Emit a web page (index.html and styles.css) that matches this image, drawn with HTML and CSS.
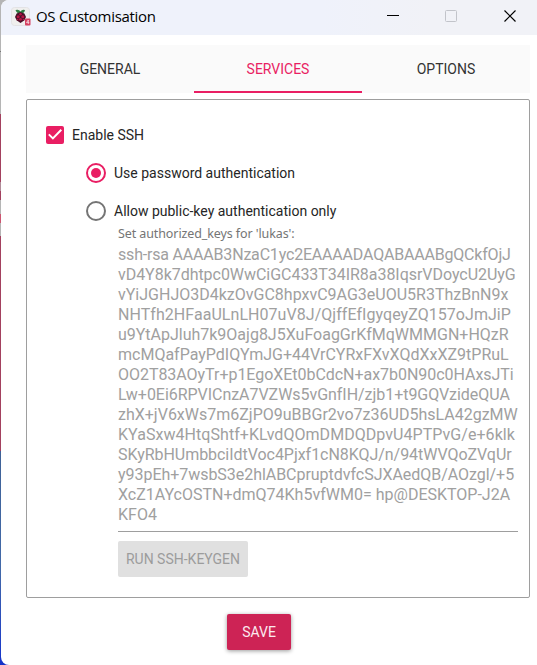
FILE: index.html
```
<!DOCTYPE html>
<html lang="en">
<head>
    <meta charset="UTF-8" />
    <meta name="viewport" content="width=device-width, initial-scale=1.0"/>
    <title>OS Customisation</title>
    <link rel="stylesheet" href="styles.css">
</head>
<body>

<div class="desktop">
<div class="window">
    <header class="titlebar">
        <svg class="app-icon" width="20" height="20" viewBox="0 0 20 20">
            <rect x="0.5" y="0.5" width="18" height="18" rx="3" fill="#f0efee" stroke="#e3e3e5"/>
            <path d="M4.5 3 Q8 1.8 9.5 4.5 Q11 1.8 14 3 Q13.5 6.5 9.5 6.5 Q5.5 6.5 4.5 3Z" fill="#2f7d43"/>
            <path d="M9.5 5 L13.4 6.5 L15 10 L13.4 13.2 L9.5 16 L5.6 13.2 L4 10 L5.6 6.5Z" fill="#4a1028"/>
            <g fill="#b51443">
                <circle cx="9.5" cy="7.3" r="1.2"/>
                <circle cx="7.2" cy="9.7" r="1.5"/>
                <circle cx="11.8" cy="9.7" r="1.5"/>
                <circle cx="9.5" cy="12.3" r="1.4"/>
                <circle cx="6.6" cy="12.6" r="0.8"/>
                <circle cx="12.4" cy="12.6" r="0.8"/>
            </g>
            <rect x="14" y="11.5" width="5.5" height="7" rx="1" fill="#d64061"/>
            <path d="M17.3 17v-4l-1.8 2.6h2.8" stroke="#f8dce2" stroke-width="0.8" fill="none"/>
        </svg>
        <h1 class="title">OS Customisation</h1>
        <div class="window-buttons">
            <svg width="58" height="35"><path d="M0 15.5h12" stroke="#000" fill="none"/></svg>
            <svg width="59" height="35"><rect x="0.5" y="10.5" width="11" height="11" rx="1" stroke="#c2c4ca" fill="none"/></svg>
            <svg width="33" height="35"><path d="M0.5 10.5l11 11M11.5 10.5l-11 11" stroke="#000" stroke-width="1.2" fill="none"/></svg>
        </div>
    </header>

    <nav class="tabs">
        <a class="tab">GENERAL</a>
        <a class="tab active">SERVICES</a>
        <a class="tab">OPTIONS</a>
    </nav>

    <main class="panel">
        <div class="option">
            <svg width="18" height="18" viewBox="0 0 18 18">
                <rect width="18" height="18" rx="2" fill="#e91e63"/>
                <path d="M2.8 8.4l4.1 4L15.3 3.8" stroke="#fff" stroke-width="2" fill="none"/>
            </svg>
            <span>Enable SSH</span>
        </div>
        <div class="option radio">
            <svg width="20" height="20" viewBox="0 0 20 20">
                <circle cx="10" cy="10" r="9" stroke="#e91e63" stroke-width="2" fill="none"/>
                <circle cx="10" cy="10" r="5" fill="#e91e63"/>
            </svg>
            <span>Use password authentication</span>
        </div>
        <div class="option radio">
            <svg width="20" height="20" viewBox="0 0 20 20">
                <circle cx="10" cy="10" r="9" stroke="#757575" stroke-width="2" fill="none"/>
            </svg>
            <span>Allow public-key authentication only</span>
        </div>

        <div class="keys">
            <div class="keys-label">Set authorized_keys for 'lukas':</div>
            <div class="keys-text">
                <span class="tightest">ssh-rsa AAAAB3NzaC1yc2EAAAADAQABAAABgQCkfOjJ</span><br>
                <span class="tight">vD4Y8k7dhtpc0WwCiGC433T34IR8a38IqsrVDoycU2UyG</span><br>
                vYiJGHJO3D4kzOvGC8hpxvC9AG3eUOU5R3ThzBnN9x<br>
                <span class="loose">NHTfh2HFaaULnLH07uV8J/QjffEfIgyqeyZQ157oJmJiP</span><br>
                u9YtApJluh7k9Oajg8J5XuFoagGrKfMqWMMGN+HQzR<br>
                mcMQafPayPdIQYmJG+44VrCYRxFXvXQdXxXZ9tPRuL<br>
                <span class="tight">OO2T83AOyTr+p1EgoXEt0bCdcN+ax7b0N90c0HAxsJTi</span><br>
                <span class="tight">Lw+0Ei6RPVICnzA7VZWs5vGnfIH/zjb1+t9GQVzideQUA</span><br>
                zhX+jV6xWs7m6ZjPO9uBBGr2vo7z36UD5hsLA42gzMW<br>
                <span class="loose">KYaSxw4HtqShtf+KLvdQOmDMDQDpvU4PTPvG/e+6klk</span><br>
                <span class="tight">SKyRbHUmbbciIdtVoc4Pjxf1cN8KQJ/n/94tWVQoZVqUr</span><br>
                <span class="tight">y93pEh+7wsbS3e2hlABCpruptdvfcSJXAedQB/AOzgl/+5</span><br>
                XcZ1AYcOSTN+dmQ74Kh5vfWM0= hp@DESKTOP-J2A<br>
                KFO4
            </div>
            <button class="btn" disabled>RUN SSH-KEYGEN</button>
        </div>
    </main>

    <footer class="footer">
        <button class="btn save">SAVE</button>
    </footer>
</div>
</div>

</body>
</html>
```

FILE: styles.css
```
* {
    box-sizing: border-box;
}
body {
    margin: 0;
    font-family: Roboto, sans-serif;
    font-size: 14px;
    color: #262626;
}
.desktop {
    height: 665px;
    padding-left: 1px;
    overflow: hidden;
    background: linear-gradient(#b5b5b5 0 51px, #777 51px 52px, #b5b5b5 52px 114px, #a3415f 114px 182px, #b08b98 182px 191px, #a3415f 191px 200px, #b5b5b5 200px 214px, #cc5570 214px 223px, #b5b5b5 223px 236px, #a3415f 236px 451px, #3f6297 451px, #4269a9 570px, #1c3cc8 650px, #1432c8);
}
.window {
    height: 665px;
    background: #fff;
    border-radius: 8px 0 0 8px;
    overflow: hidden;
}
.titlebar {
    display: flex;
    align-items: flex-start;
    height: 35px;
    padding-left: 10px;
    background: linear-gradient(90deg, #eff2fb 60%, #f1f2f7 80%);
}
.app-icon {
    margin-top: 7px;
}
.title {
    margin: 0 0 0 5px;
    font: 15px/33px "Open Sans", sans-serif;
    letter-spacing: -0.3px;
    color: #000;
}
.window-buttons {
    display: flex;
    margin-left: auto;
}
.tabs {
    display: grid;
    grid-template-columns: repeat(3, 1fr);
    width: 504px;
    height: 48px;
    margin: 10px 0 6px 25px;
    background: #fafafa;
}
.tab {
    line-height: 48px;
    text-align: center;
    color: #333;
}
.tab.active {
    color: #e91e63;
    box-shadow: inset 0 -2px #e91e63;
}
.panel {
    width: 504px;
    height: 499px;
    margin-left: 25px;
    padding: 16px 11px 0 19px;
    border: 1px solid #9e9e9e;
    border-radius: 2px;
}
.option {
    display: flex;
    align-items: center;
    gap: 8px;
    height: 38px;
}
.option.radio {
    padding-left: 40px;
}
.keys {
    padding-left: 72px;
}
.keys-label {
    height: 14px;
    margin-top: -3px;
    font: 12.5px/14px "Noto Sans", sans-serif;
    letter-spacing: -0.1px;
    color: #757575;
}
.keys-text {
    height: 291px;
    margin-bottom: 9px;
    padding-top: 4px;
    border-bottom: 1px solid #9e9e9e;
    font-size: 16px;
    line-height: 20px;
    white-space: nowrap;
    color: #a0a0a0;
}
.tightest {
    letter-spacing: -0.19px;
}
.tight {
    letter-spacing: -0.04px;
}
.loose {
    letter-spacing: 0.05px;
}
.btn {
    display: block;
    height: 36px;
    width: 130px;
    padding: 0;
    border: 0;
    border-radius: 2px;
    background: #e0e0e0;
    font: 14px Roboto, sans-serif;
    color: #9c9c9c;
}
.footer {
    padding: 16px 0 0 226px;
}
.btn.save {
    width: 64px;
    background: #cd2355;
    color: #fbe9ef;
    box-shadow: 0 1px 4px rgba(0, 0, 0, 0.4);
}
```
